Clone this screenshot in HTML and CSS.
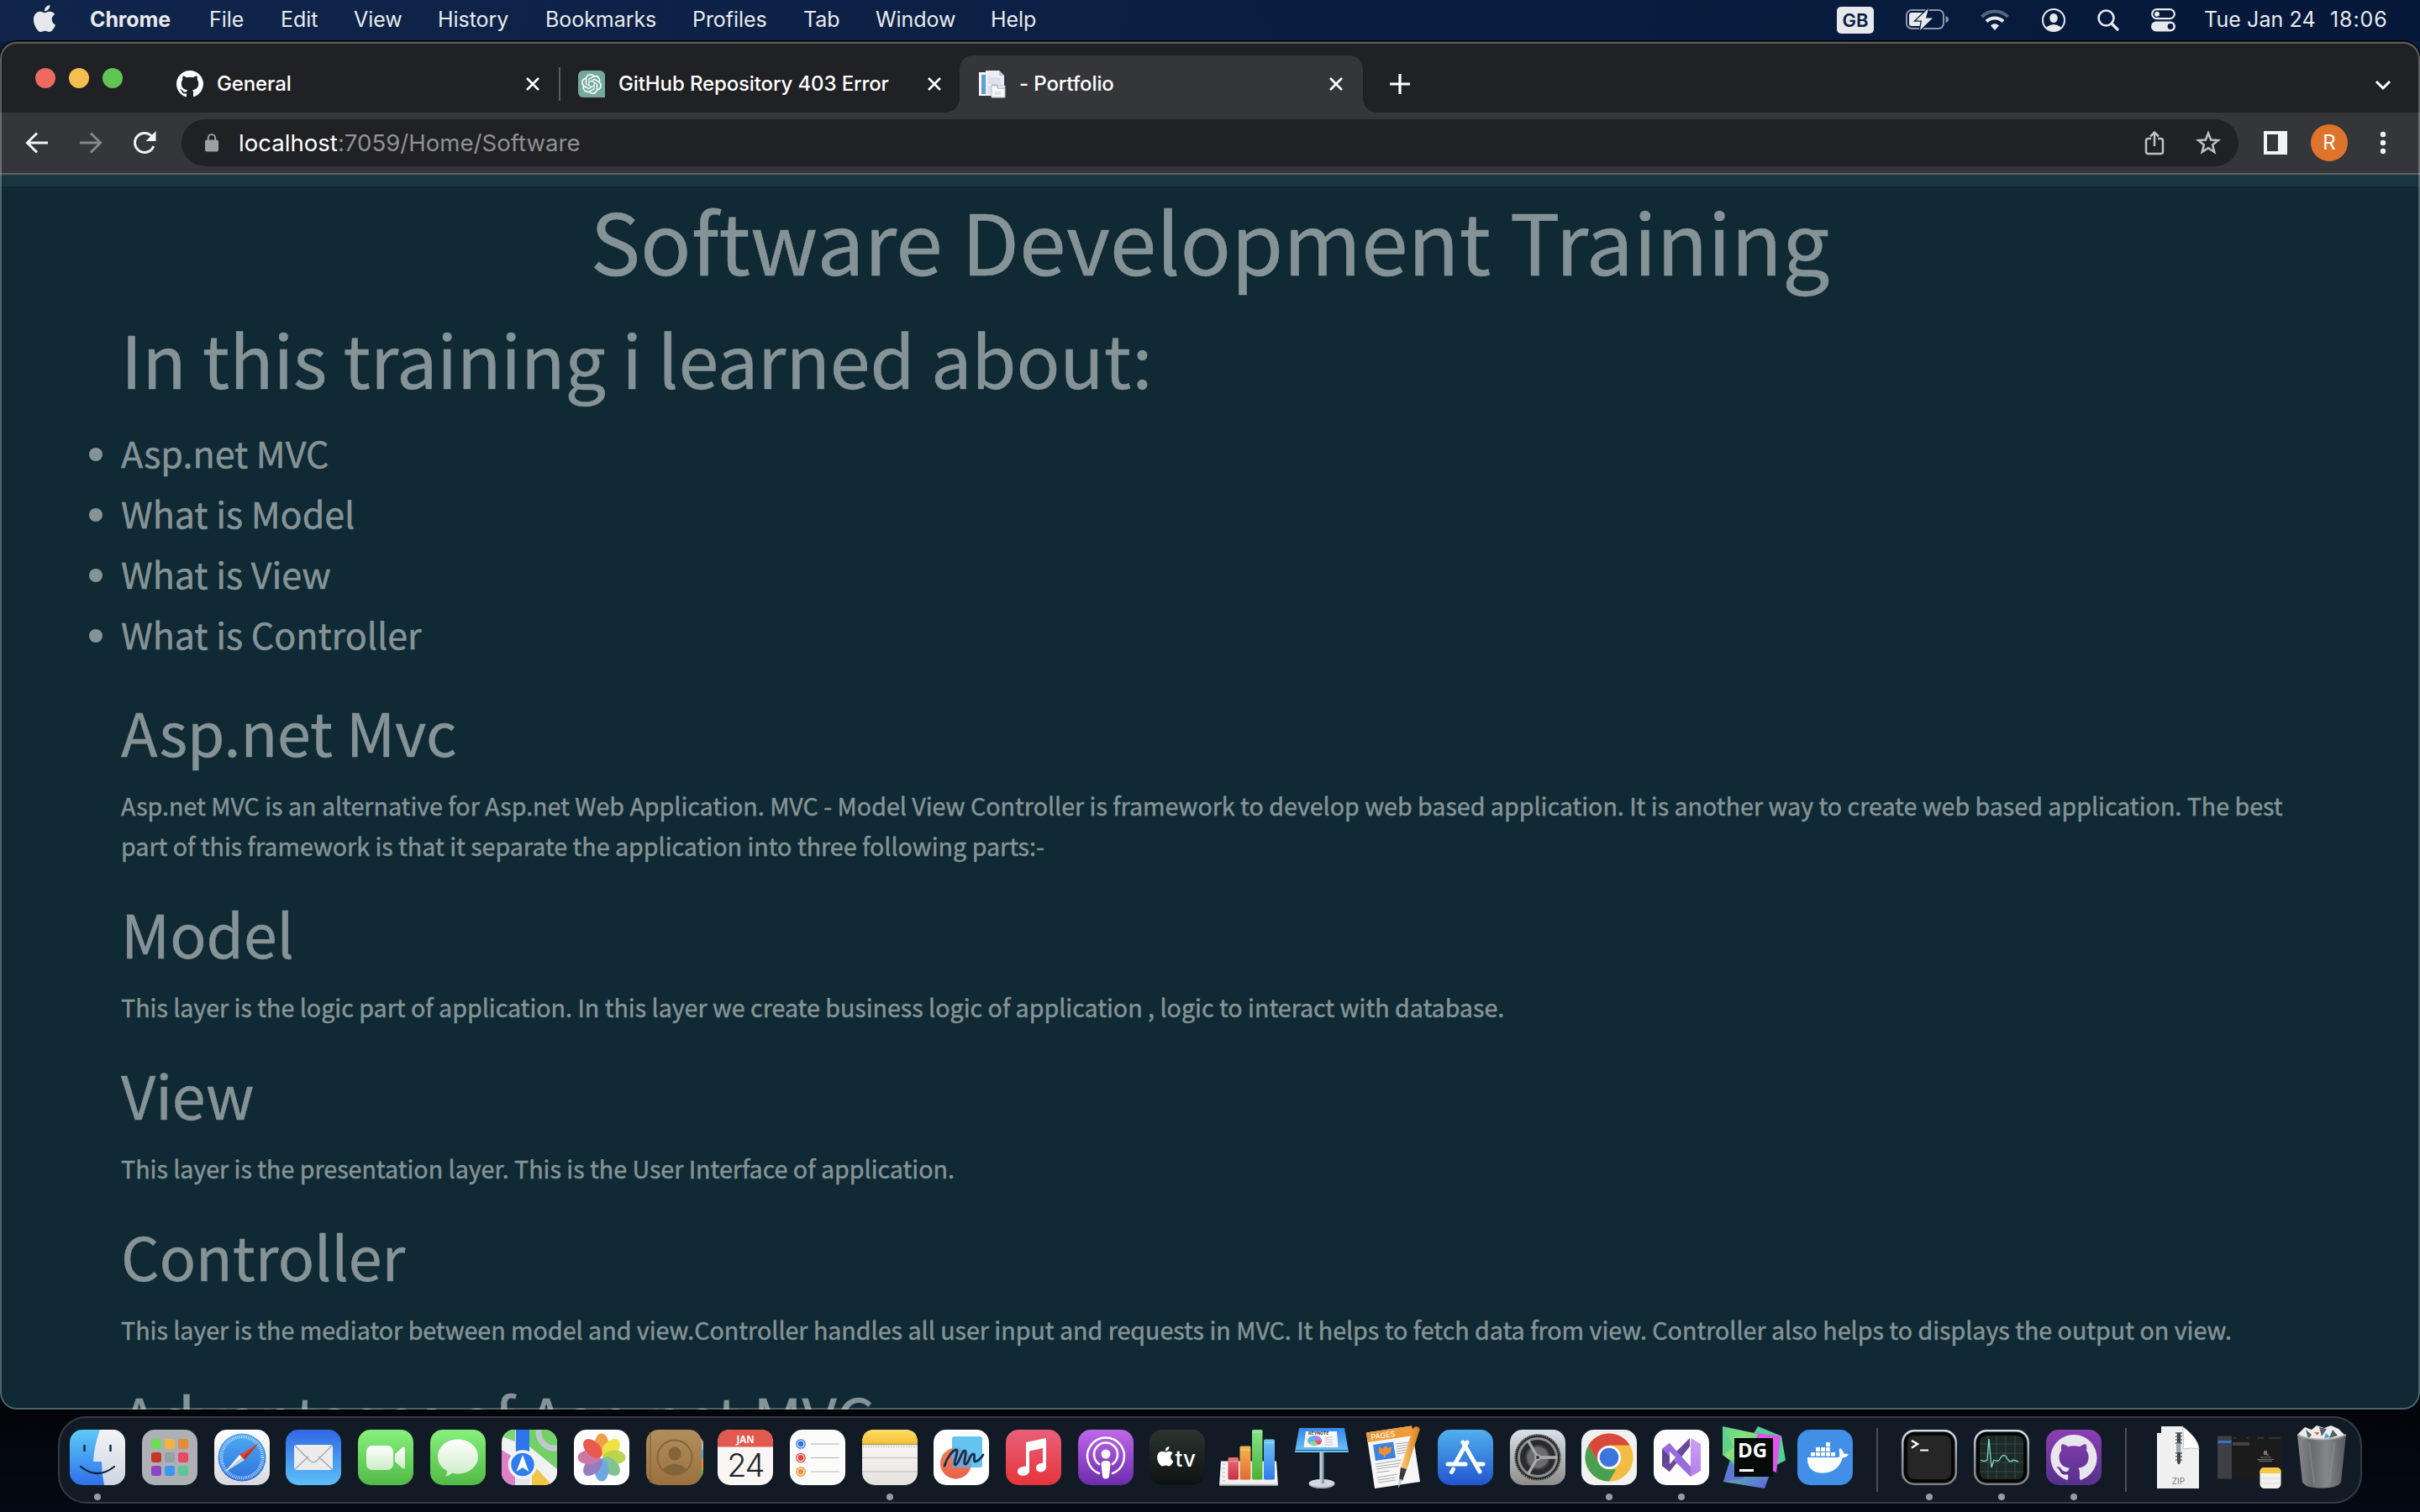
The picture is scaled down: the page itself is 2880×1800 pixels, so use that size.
FILE: index.html
```html
<!DOCTYPE html>
<html lang="en">
<head>
<meta charset="utf-8">
<title>- Portfolio</title>
<link rel="stylesheet" href="styles.css">
</head>
<body>
<svg class="defs" aria-hidden="true">
  <defs>
    <path id="apple" d="M12.152 6.896c-.948 0-2.415-1.078-3.96-1.04-2.04.027-3.91 1.183-4.961 3.014-2.117 3.675-.546 9.103 1.519 12.09 1.013 1.454 2.208 3.09 3.792 3.039 1.52-.065 2.09-.987 3.935-.987 1.831 0 2.35.987 3.96.948 1.637-.026 2.676-1.48 3.676-2.948 1.156-1.688 1.636-3.325 1.662-3.415-.039-.013-3.182-1.221-3.22-4.857-.026-3.04 2.48-4.494 2.597-4.559-1.429-2.09-3.623-2.324-4.39-2.376-2-.156-3.675 1.09-4.61 1.09zM15.53 3.83c.843-1.012 1.4-2.427 1.245-3.83-1.207.052-2.662.805-3.532 1.818-.78.896-1.454 2.338-1.273 3.714 1.338.104 2.715-.688 3.559-1.701"/>
    <path id="octocat" d="M8 0C3.58 0 0 3.58 0 8c0 3.54 2.29 6.53 5.47 7.59.4.07.55-.17.55-.38 0-.19-.01-.82-.01-1.49-2.01.37-2.53-.49-2.69-.94-.09-.23-.48-.94-.82-1.13-.28-.15-.68-.52-.01-.53.63-.01 1.08.58 1.23.82.72 1.21 1.87.87 2.33.66.07-.52.28-.87.51-1.07-1.78-.2-3.64-.89-3.64-3.95 0-.87.31-1.59.82-2.15-.08-.2-.36-1.02.08-2.12 0 0 .67-.21 2.2.82.64-.18 1.32-.27 2-.27.68 0 1.36.09 2 .27 1.53-1.04 2.2-.82 2.2-.82.44 1.1.16 1.92.08 2.12.51.56.82 1.27.82 2.15 0 3.07-1.87 3.75-3.65 3.95.29.25.54.73.54 1.48 0 1.07-.01 1.93-.01 2.2 0 .21.15.46.55.38A8.013 8.013 0 0016 8c0-4.42-3.58-8-8-8z"/>
    <clipPath id="squircle"><rect width="66" height="66" rx="15"/></clipPath>
    <linearGradient id="gFinder" x2="0" y2="1"><stop stop-color="#5ccbf9"/><stop offset="1" stop-color="#2f6fe9"/></linearGradient>
    <linearGradient id="gFace" x2="0" y2="1"><stop stop-color="#f3f3f5"/><stop offset="1" stop-color="#cdd6e2"/></linearGradient>
    <linearGradient id="gWhite" x2="0" y2="1"><stop stop-color="#ffffff"/><stop offset="1" stop-color="#d9d9db"/></linearGradient>
    <linearGradient id="gSafari" x2="0" y2="1"><stop stop-color="#4dabf0"/><stop offset="1" stop-color="#2f72de"/></linearGradient>
    <linearGradient id="gMail" x2="0" y2="1"><stop stop-color="#3068e5"/><stop offset="1" stop-color="#5cc0f8"/></linearGradient>
    <linearGradient id="gGreen" x2="0" y2="1"><stop stop-color="#86f17c"/><stop offset="1" stop-color="#52b945"/></linearGradient>
    <linearGradient id="gBubble" x2="0" y2="1"><stop stop-color="#ffffff"/><stop offset="1" stop-color="#cdebc8"/></linearGradient>
    <linearGradient id="gBrown" x2="0" y2="1"><stop stop-color="#b08f5c"/><stop offset="1" stop-color="#9b703f"/></linearGradient>
    <linearGradient id="gYellow" x2="0" y2="1"><stop stop-color="#fadf68"/><stop offset="1" stop-color="#f6c033"/></linearGradient>
    <linearGradient id="gPaper" x2="0" y2="1"><stop stop-color="#ffffff"/><stop offset="1" stop-color="#e4e1dc"/></linearGradient>
    <linearGradient id="gMusic" x2="0" y2="1"><stop stop-color="#e8607a"/><stop offset="1" stop-color="#e6343b"/></linearGradient>
    <linearGradient id="gPod" x2="0" y2="1"><stop stop-color="#bd68ea"/><stop offset="1" stop-color="#6c2cab"/></linearGradient>
    <linearGradient id="gTv" x2="0" y2="1"><stop stop-color="#2a3530"/><stop offset="1" stop-color="#0e1112"/></linearGradient>
    <linearGradient id="gStore" x2="0" y2="1"><stop stop-color="#50b0ee"/><stop offset="1" stop-color="#2354cf"/></linearGradient>
    <linearGradient id="gGear" x2="0" y2="1"><stop stop-color="#d6e2ea"/><stop offset="1" stop-color="#8f8c89"/></linearGradient>
    <linearGradient id="gMetal" x2="0" y2="1"><stop stop-color="#cfdfe9"/><stop offset=".5" stop-color="#8f9ba5"/><stop offset="1" stop-color="#827f7d"/></linearGradient>
    <linearGradient id="gHub" x2="0" y2="1"><stop stop-color="#8a3fb4"/><stop offset="1" stop-color="#56308a"/></linearGradient>
    <linearGradient id="gRed" x2="0" y2="1"><stop stop-color="#e8707a"/><stop offset="1" stop-color="#c92f3e"/></linearGradient>
    <linearGradient id="gOrange" x2="0" y2="1"><stop stop-color="#f3b74c"/><stop offset="1" stop-color="#e26a33"/></linearGradient>
    <linearGradient id="gBarGreen" x2="0" y2="1"><stop stop-color="#84e58c"/><stop offset="1" stop-color="#4bb033"/></linearGradient>
    <linearGradient id="gBarBlue" x2="0" y2="1"><stop stop-color="#6fc6f4"/><stop offset="1" stop-color="#2f79ec"/></linearGradient>
    <linearGradient id="gBoard" x2="0" y2="1"><stop stop-color="#3488ee"/><stop offset="1" stop-color="#6fc6f4"/></linearGradient>
    <linearGradient id="gPole"><stop stop-color="#dfe6ee"/><stop offset=".5" stop-color="#aab8c8"/><stop offset="1" stop-color="#6d7a88"/></linearGradient>
    <linearGradient id="gPen"><stop stop-color="#ffd27a"/><stop offset="1" stop-color="#d77a1a"/></linearGradient>
    <linearGradient id="gBin"><stop stop-color="#8d8f91"/><stop offset=".3" stop-color="#6e7072"/><stop offset=".6" stop-color="#8a8c8e"/><stop offset="1" stop-color="#5a5d60"/></linearGradient>
    <linearGradient id="gDgA" x2="1" y2="1"><stop stop-color="#55cf90"/><stop offset=".4" stop-color="#8be27a"/><stop offset="1" stop-color="#4fb5a5"/></linearGradient>
    <linearGradient id="gDgB" x2="1" y2="1"><stop stop-color="#5fdc8a"/><stop offset="1" stop-color="#5b5be8"/></linearGradient>
    <linearGradient id="gVs" x2="0" y2="1"><stop stop-color="#c9a0f5"/><stop offset="1" stop-color="#b380ec"/></linearGradient>
  </defs>
</svg>

<header class="menubar">
  <nav class="menus">
    <svg class="menu-apple" viewBox="0 0 24 24"><use href="#apple"/></svg>
    <b class="app-name">Chrome</b><span>File</span><span>Edit</span><span>View</span><span>History</span><span>Bookmarks</span><span>Profiles</span><span>Tab</span><span>Window</span><span>Help</span>
  </nav>
  <div class="status">
    <span class="lang">GB</span>
    <svg width="52" height="26" viewBox="0 0 52 26"><rect x="1" y="1" width="44" height="22" rx="6" fill="none" stroke="#8c97a9" stroke-width="2"/><path d="M47.500 8q3.500 1 3.500 4t-3.500 4z" fill="#8c97a9"/><rect x="4" y="4" width="20" height="16" rx="3"/><path d="M27-1 12 13.500h7L17 25 32 10.500h-8z" stroke="#061a3a" stroke-width="2.500" paint-order="stroke"/></svg>
    <svg width="34" height="26" viewBox="0 0 34 26"><path d="M1.500 9a22 22 0 0 1 31 0" fill="none" stroke="#57657c" stroke-width="4"/><path d="M7 14.500a14.500 14.500 0 0 1 20 0" fill="none" stroke="#e6e8ec" stroke-width="4"/><path d="M17 25l-5-5.500q5-4.500 10 0z"/></svg>
    <svg width="28" height="28" viewBox="0 0 28 28"><circle cx="14" cy="14" r="13" fill="none" stroke="#e6e8ec" stroke-width="2"/><ellipse cx="14" cy="11.500" rx="4.700" ry="5.500"/><path d="M5 22.500q9-7 18 0a12 12 0 0 1-18 0z"/></svg>
    <svg width="26" height="26" viewBox="0 0 26 26"><circle cx="10.500" cy="10.500" r="9" fill="none" stroke="#e6e8ec" stroke-width="2.600"/><path d="M17 17l7 7" stroke="#e6e8ec" stroke-width="3.400" stroke-linecap="round"/></svg>
    <svg width="29" height="28" viewBox="0 0 29 28"><rect x="1.200" y="1.200" width="26.600" height="11" rx="5.500" fill="none" stroke="#e6e8ec" stroke-width="2.200"/><circle cx="7" cy="6.700" r="3"/><rect y="15.500" width="29" height="12" rx="6"/><circle cx="23" cy="21.500" r="3.400" fill="#061a3a"/></svg>
    <span class="date">Tue Jan 24</span><span class="time">18:06</span>
  </div>
</header>

<main class="window">
  <div class="tabstrip">
    <div class="lights"><i class="red"></i><i class="amber"></i><i class="green"></i></div>
    <div class="tab first">
      <svg class="fav" viewBox="0 0 16 16" fill="#fff"><use href="#octocat"/></svg>
      <span class="tab-title">General</span>
      <svg class="close" viewBox="0 0 18 18"><path d="M2 2l14 14M16 2 2 16"/></svg>
    </div>
    <i class="tab-sep"></i>
    <div class="tab second">
      <svg class="fav" viewBox="0 0 32 32"><path d="M6 0h20a6 6 0 0 1 6 6v26H6a6 6 0 0 1-6-6V6a6 6 0 0 1 6-6z" fill="#75a99c"/><path transform="translate(4 4)" fill="#fff" d="M22.282 9.821a5.985 5.985 0 0 0-.516-4.910 6.046 6.046 0 0 0-6.510-2.900A6.065 6.065 0 0 0 4.981 4.182a5.985 5.985 0 0 0-3.998 2.900 6.046 6.046 0 0 0 .743 7.097 5.980 5.980 0 0 0 .511 4.911 6.051 6.051 0 0 0 6.515 2.900A5.985 5.985 0 0 0 13.260 24a6.056 6.056 0 0 0 5.772-4.206 5.989 5.989 0 0 0 3.998-2.900 6.056 6.056 0 0 0-.748-7.073zm-9.022 12.608a4.476 4.476 0 0 1-2.876-1.041l.142-.080 4.778-2.758a.795.795 0 0 0 .393-.681v-6.737l2.020 1.169a.071.071 0 0 1 .038.052v5.583a4.504 4.504 0 0 1-4.495 4.494zm-9.661-4.125a4.471 4.471 0 0 1-.535-3.014l.142.085 4.783 2.758a.771.771 0 0 0 .781 0l5.843-3.369v2.332a.080.080 0 0 1-.033.062L9.740 19.950a4.499 4.499 0 0 1-6.141-1.646zM2.341 7.896a4.485 4.485 0 0 1 2.366-1.973V11.600a.766.766 0 0 0 .388.677l5.814 3.354-2.020 1.169a.076.076 0 0 1-.071 0l-4.830-2.787A4.504 4.504 0 0 1 2.341 7.872zm16.596 3.856L13.104 8.364 15.119 7.200a.076.076 0 0 1 .071 0l4.830 2.791a4.494 4.494 0 0 1-.677 8.104v-5.677a.790.790 0 0 0-.407-.667zm2.011-3.023l-.142-.085-4.774-2.782a.776.776 0 0 0-.785 0L9.409 9.230V6.897a.066.066 0 0 1 .028-.062l4.830-2.787a4.499 4.499 0 0 1 6.680 4.660zM8.307 12.863l-2.020-1.164a.080.080 0 0 1-.038-.057V6.074a4.499 4.499 0 0 1 7.376-3.454l-.142.081L8.704 5.459a.795.795 0 0 0-.393.681zm1.098-2.365l2.602-1.500 2.607 1.500v2.999l-2.597 1.500-2.607-1.500z"/></svg>
      <span class="tab-title">GitHub Repository 403 Error</span>
      <svg class="close" viewBox="0 0 18 18"><path d="M2 2l14 14M16 2 2 16"/></svg>
    </div>
    <div class="tab active">
      <svg class="fav" viewBox="0 0 32 32"><path d="M0 2h8v28H0z" fill="#f4f8fb"/><path d="M3 5h6v23H3z" fill="#5d9fd0"/><path d="M8 0h16l6 6v24H8z" fill="#eceef3"/><path d="M24 0l6 6h-6z" fill="#c4c8d0"/><path d="M11 8h15v8H11zM11 18h5v9h-5z" fill="#dde0ea"/><path d="M15 18h16v14H15z" fill="#f6f7f9" stroke="#babec6"/><path d="M15 17h7v4h9" fill="none" stroke="#9ca2ab"/><path d="M19 25h7v4h-7z" fill="#dfe2e8"/></svg>
      <span class="tab-title">- Portfolio</span>
      <svg class="close" viewBox="0 0 18 18"><path d="M2 2l14 14M16 2 2 16"/></svg>
    </div>
    <svg class="plus" viewBox="0 0 24 24"><path d="M12 0v24M0 12h24"/></svg>
    <svg class="chev" viewBox="0 0 20 12"><path d="M2 2l8 8 8-8"/></svg>
  </div>

  <div class="toolbar">
    <svg class="nav" viewBox="0 0 28 28"><path d="M27 14H3M14 2.500 2.500 14 14 25.500"/></svg>
    <svg class="nav dim" viewBox="0 0 28 28"><path d="M1 14h24M14 2.500 25.500 14 14 25.500"/></svg>
    <svg class="nav" viewBox="0 0 28 28"><path d="M24.800 18A11.500 11.500 0 1 1 22.600 6.300"/><path d="M27.500 0v12h-12z" class="solid"/></svg>
    <div class="omnibox">
      <svg class="lock" viewBox="0 0 16 22"><rect y="7.500" width="16" height="14" rx="2"/><path d="M3.800 8V5.300a4.200 4.200 0 0 1 8.400 0V8" fill="none" stroke="#9aa0a6" stroke-width="2"/></svg>
      <span class="url">localhost<em>:7059/Home/Software</em></span>
      <svg class="share" viewBox="0 0 24 30"><path d="M8 10H4.500Q2 10 2 12.500v13Q2 28 4.500 28h15q2.500 0 2.500-2.500v-13Q22 10 19.500 10H16M12 19V3M7 7.500l5-5 5 5"/></svg>
      <svg class="star" viewBox="0 0 30 30"><path d="M15 3.500l3.100 8 8.700.5-6.700 5.500 2.200 8.500-7.300-4.700L7.700 26l2.200-8.500L3.200 12l8.700-.5z"/></svg>
    </div>
    <svg class="panel" viewBox="0 0 28 28"><path d="M0 0h28v28H0zM4 4v20h13V4z" fill-rule="evenodd"/></svg>
    <span class="avatar">R</span>
    <svg class="dots" viewBox="0 0 8 28"><circle cx="4" cy="4" r="3.200"/><circle cx="4" cy="14" r="3.200"/><circle cx="4" cy="24" r="3.200"/></svg>
  </div>

  <section class="page">
    <div class="navband"></div>
    <h1 class="title">Software Development Training</h1>
    <h2 class="lead">In this training i learned about:</h2>
    <ul class="topics">
      <li>Asp.net MVC</li>
      <li>What is Model</li>
      <li>What is View</li>
      <li>What is Controller</li>
    </ul>
    <h3>Asp.net Mvc</h3>
    <p>Asp.net MVC is an alternative for Asp.net Web Application. MVC - Model View Controller is framework to develop web based application. It is another way to create web based application. The best<br>part of this framework is that it separate the application into three following parts:-</p>
    <h3>Model</h3>
    <p>This layer is the logic part of application. In this layer we create business logic of application , logic to interact with database.</p>
    <h3>View</h3>
    <p>This layer is the presentation layer. This is the User Interface of application.</p>
    <h3>Controller</h3>
    <p>This layer is the mediator between model and view.Controller handles all user input and requests in MVC. It helps to fetch data from view. Controller also helps to displays the output on view.</p>
    <h3>Advantages of Asp.net MVC</h3>
  </section>
</main>

<footer class="dock">
  <div class="app running"><svg viewBox="0 0 66 66"><g clip-path="url(#squircle)"><path fill="url(#gFinder)" d="M0 0h66v66H0z"/><path fill="url(#gFace)" d="M36 0q-7 19-8 38h10q0 14 3 28h25V0z"/></g><path d="M17.500 19v6M48.500 19v6" stroke="#1b2f45" stroke-width="2.600" stroke-linecap="round"/><path d="M13 44q20 16 40 0" fill="none" stroke="#15202c" stroke-width="2.200" stroke-linecap="round"/></svg></div>
  <div class="app"><svg viewBox="0 0 66 66"><rect width="66" height="66" rx="15" fill="#adb0b4"/><rect x="11" y="11" width="12" height="12" rx="3" fill="#6fdc55"/><rect x="27" y="11" width="12" height="12" rx="3" fill="#f2b53c"/><rect x="43" y="11" width="12" height="12" rx="3" fill="#e58a36"/><rect x="11" y="27" width="12" height="12" rx="3" fill="#c8352b"/><rect x="27" y="27" width="12" height="12" rx="3" fill="#96a0a5"/><rect x="43" y="27" width="12" height="12" rx="3" fill="#e84a5f"/><rect x="11" y="43" width="12" height="12" rx="3" fill="#8e45c4"/><rect x="27" y="43" width="12" height="12" rx="3" fill="#3a97f2"/><rect x="43" y="43" width="12" height="12" rx="3" fill="#60c596"/></svg></div>
  <div class="app"><svg viewBox="0 0 66 66"><rect width="66" height="66" rx="15" fill="url(#gWhite)"/><circle cx="33" cy="33" r="28.500" fill="url(#gSafari)"/><circle cx="33" cy="33" r="24.500" fill="none" stroke="#d4e7fa" stroke-width="4" stroke-dasharray=".8 1.340"/><path d="M53 16 30 30l6 6z" fill="#e0453a"/><path d="M53 16 36 36l-3-3z" fill="#b93329"/><path d="M13 50l17-20 6 6z" fill="#f2f4f6"/><path d="M13 50l20-17 3 3z" fill="#c4ccd4"/></svg></div>
  <div class="app"><svg viewBox="0 0 66 66"><rect width="66" height="66" rx="15" fill="url(#gMail)"/><rect x="10" y="18" width="46" height="30" rx="3" fill="#ececed"/><path d="M11 47l16-15M55 47 39 32M11 19l18 18q4 3.500 8 0l18-18" fill="none" stroke="#a7abb0" stroke-width="1.500"/></svg></div>
  <div class="app"><svg viewBox="0 0 66 66"><rect width="66" height="66" rx="15" fill="url(#gGreen)"/><rect x="10" y="19" width="32" height="29" rx="7" fill="url(#gBubble)"/><path d="M44 29l9-8q3-1.500 3 1v23q0 2.500-3 1l-9-8z" fill="url(#gBubble)"/></svg></div>
  <div class="app"><svg viewBox="0 0 66 66"><rect width="66" height="66" rx="15" fill="url(#gGreen)"/><path d="M33 11.500c13.500 0 24 9 24 20.500s-10.500 20.500-24 20.500q-4 0-7-1-3 3.500-8.500 4 3-3 2.500-6.500C13.500 45.500 9 39.500 9 32c0-11.500 10.500-20.500 24-20.500z" fill="url(#gBubble)"/></svg></div>
  <div class="app"><svg viewBox="0 0 66 66"><g clip-path="url(#squircle)"><path fill="#f0f1f3" d="M0 0h66v66H0z"/><path d="M0 0h16v14L0 8z" fill="#7cd673"/><path d="M33 0h33v47L33 20z" fill="#73cf68"/><path d="M0 24l16 10v32H0z" fill="#dd80c8"/><path d="M36 66V40l24 26z" fill="#f3c544"/><path d="M16 0h17v66H16z" fill="#e4e6ec"/><path d="M17 0h16v26H17z" fill="#2e74ea"/><circle cx="63" cy="3" r="19" fill="none" stroke="#c2c6ce" stroke-width="7"/></g><circle cx="25" cy="41.500" r="15.500" fill="#2f7df0" stroke="#f1f3f6" stroke-width="3.500"/><path d="M25 30l7.500 20-7.500-5-7.500 5z" fill="#fff"/></svg></div>
  <div class="app"><svg viewBox="0 0 66 66"><rect width="66" height="66" rx="15" fill="#fdfdfd"/><g opacity=".9"><ellipse cx="33" cy="18" rx="8.500" ry="13.500" fill="#f09436"/><ellipse cx="33" cy="18" rx="8.500" ry="13.500" fill="#f0e02f" transform="rotate(45 33 33)"/><ellipse cx="33" cy="18" rx="8.500" ry="13.500" fill="#b6d03c" transform="rotate(90 33 33)"/><ellipse cx="33" cy="18" rx="8.500" ry="13.500" fill="#73bd83" transform="rotate(135 33 33)"/><ellipse cx="33" cy="18" rx="8.500" ry="13.500" fill="#5e9fdb" transform="rotate(180 33 33)"/><ellipse cx="33" cy="18" rx="8.500" ry="13.500" fill="#8b6dbb" transform="rotate(225 33 33)"/><ellipse cx="33" cy="18" rx="8.500" ry="13.500" fill="#c9699e" transform="rotate(270 33 33)"/><ellipse cx="33" cy="18" rx="8.500" ry="13.500" fill="#e8483c" transform="rotate(315 33 33)"/></g></svg></div>
  <div class="app"><svg viewBox="0 0 66 66"><path d="M60 9q8 0 8 8v8h-8z" fill="#b9b9b5"/><path d="M60 24h8v11h-8z" fill="#53a7e4"/><path d="M60 35h8v12h-8z" fill="#ee8c34"/><path d="M60 47h8q0 11-8 12z" fill="#6cc85d"/><rect width="66" height="66" rx="15" fill="url(#gBrown)"/><path d="M5 3v60" stroke="#8b673b" stroke-width="1.500"/><circle cx="34" cy="33" r="20.500" fill="none" stroke="#84633a" stroke-width="1.800"/><ellipse cx="34" cy="28.500" rx="7.500" ry="8" fill="#84633a"/><path d="M20 47q14-13 28 0-14 14-28 0z" fill="#84633a"/></svg></div>
  <div class="app"><svg viewBox="0 0 66 66"><rect width="66" height="66" rx="15" fill="#f8f7f6"/><path d="M0 20.500V15Q0 0 15 0h36q15 0 15 15v5.500z" fill="#e2594f"/><text x="33" y="16" class="cal-month">JAN</text><text x="33" y="56" class="cal-day">24</text></svg></div>
  <div class="app"><svg viewBox="0 0 66 66"><rect width="66" height="66" rx="15" fill="#fbfbfa"/><g stroke-width="1.300"><circle cx="13" cy="17" r="5.200" fill="none" stroke="#3478e5"/><circle cx="13" cy="17" r="3.400" fill="#2e76ea"/><circle cx="13" cy="33.500" r="5.200" fill="none" stroke="#e2483e"/><circle cx="13" cy="33.500" r="3.400" fill="#e2483e"/><circle cx="13" cy="50" r="5.200" fill="none" stroke="#e69235"/><circle cx="13" cy="50" r="3.400" fill="#e69235"/></g><path d="M25 17h34M25 33.500h34M25 50h34" stroke="#b4b6ba" stroke-width="1.200"/></svg></div>
  <div class="app running"><svg viewBox="0 0 66 66"><rect width="66" height="66" rx="15" fill="url(#gPaper)"/><path d="M0 17v-2Q0 0 15 0h36q15 0 15 15v2z" fill="url(#gYellow)"/><path d="M0 17.500h66" stroke="#a8997a" stroke-width="1.500"/><path d="M1 20.500h64" stroke="#c2c0ba" stroke-width="1.500" stroke-dasharray="1.500 1.500"/><path d="M0 33.500h66M0 50h66" stroke="#cfccc8" stroke-width="1.300"/></svg></div>
  <div class="app"><svg viewBox="0 0 66 66"><rect width="66" height="66" rx="15" fill="#fff"/><circle cx="26.500" cy="40" r="18.500" fill="url(#gOrange)"/><circle cx="26.500" cy="40" r="18.500" fill="#ed5b64" opacity=".55"/><rect x="22" y="8" width="36" height="37" rx="3" fill="#53bdee" opacity=".9"/><path d="M22 45V22q10-1 19 7 5 8 4 16z" fill="#7d9fd0" opacity=".8"/><path d="M13 43c3-10 10-19 14-19s-5 18-1 18 7-17 11-17-3 16 1 16 5-12 9-12-1 10 3 9 7-5 9-8" fill="none" stroke="#11304c" stroke-width="2.800" stroke-linecap="round"/></svg></div>
  <div class="app"><svg viewBox="0 0 66 66"><rect width="66" height="66" rx="15" fill="url(#gMusic)"/><path d="M24 15l24-5v34.500c0 7-12 8-12 1 0-4 4-5.500 8-6V22l-16 3.500V49c0 7.500-15 8-14 0 .5-4 5-5 10-5.500z" fill="#fff"/></svg></div>
  <div class="app"><svg viewBox="0 0 66 66"><rect width="66" height="66" rx="15" fill="url(#gPod)"/><g fill="none" stroke="#fff" stroke-width="2.600" stroke-linecap="round"><path d="M25 52a22 22 0 1 1 16 0"/><path d="M25 41a14 14 0 1 1 16 0"/></g><circle cx="33" cy="29" r="5.500" fill="#fff"/><path d="M27.500 41q0-4 5.500-4t5.500 4l-1.500 14q-.5 3.500-4 3.500T29 55z" fill="#fff"/></svg></div>
  <div class="app"><svg viewBox="0 0 66 66"><rect width="66" height="66" rx="15" fill="url(#gTv)"/><use href="#apple" transform="translate(7 20) scale(.98)" fill="#fff"/><text x="30.500" y="44" class="tv">tv</text></svg></div>
  <div class="app"><svg viewBox="0 0 66 66"><path d="M-1 37.500h66l2 29H-3z" fill="#f2f2f3"/><path d="M-3 65.500h70" stroke="#bfc0c2" stroke-width="1.500"/><path d="M1 41h3M1 46h3M1 51h3M1 56h3M1 61h3" stroke="#b9babd"/><rect x="7.500" y="33" width="12.500" height="26.500" rx="1.500" fill="url(#gRed)"/><rect x="21.500" y="19.500" width="13" height="40" rx="1.500" fill="url(#gOrange)"/><rect x="36" width="12.500" height="59.500" rx="1.500" fill="url(#gBarGreen)"/><rect x="50" y="11.500" width="13" height="48" rx="1.500" fill="url(#gBarBlue)"/><path d="M8 37.500h12M22 24h12M36.500 3h12M50.500 15.500h12" stroke="#fff" stroke-opacity=".4"/></svg></div>
  <div class="app"><svg viewBox="0 0 66 66"><ellipse cx="33" cy="64.500" rx="15.500" ry="5.500" fill="#a9b3bf"/><ellipse cx="33" cy="63.500" rx="15" ry="4.500" fill="#d0d8e1"/><path d="M30.500 27h5.200v37q-2.600 1.500-5.200 0z" fill="url(#gPole)"/><path d="M6-2h54l5 29H1z" fill="url(#gBoard)"/><path d="M1.500 24.500h63" stroke="#23588c" stroke-width="1"/><path d="M14 2h37l1.500 19h-41z" fill="#f7f8fa"/><text x="17" y="6.300" class="key">KEYNOTE</text><ellipse cx="24.500" cy="13" rx="8.500" ry="6" fill="#58b3f0"/><path d="M24.500 13l-7.500 3q4 4 12 2z" fill="#8ddf73"/><path d="M24.500 13V7q7 0 8.500 6z" fill="#ba79e8"/><path d="M24.500 13H33q0 4-4 5z" fill="#e5506c"/><path d="M36 9h10M36 12h10M36 15h10M36 18h10" stroke="#c9b7cf" stroke-width="1.200"/></svg></div>
  <div class="app"><svg viewBox="0 0 66 66"><path d="M1 3.500 55-4.500 65 62l-54 8z" fill="#f6f6f6"/><path d="M1 3.500 55-4.500 57 7 2.500 15z" fill="#f09b38"/><text x="7" y="12" class="pages" transform="rotate(-8 7 12)">PAGES</text><path d="M9 18l24-3.500 3 19-24 3.500z" fill="#3d82e2"/><path d="M16 20l4 3 4-4 3 3 4-2-1 7-6 3-1 4-2-4-5-2z" fill="#ee8f2e"/><path d="M36 17l16-2M36.500 20l14-2M37 23l12-2M37 26l11-2M37.500 29l10-2M12 41l31-5M12.500 44l29-4M13 47l27-4M13.500 51l15-2M14 57l24-4M14.500 60l21-3M15 63l21-3" stroke="#aaa" stroke-width="1"/><path d="M56 0q2-5 6-3.500T64 2L49 48h-8z" fill="url(#gPen)"/><path d="M42 45l7 2-5 14-4-2z" fill="#3a3a3c"/><path d="M40 58l4 2-5 9.500z" fill="#c5c8cc"/></svg></div>
  <div class="app"><svg viewBox="0 0 66 66"><rect width="66" height="66" rx="15" fill="url(#gStore)"/><g stroke="#fff" stroke-width="5" stroke-linecap="round"><path d="M35 15 22 38M30 15l20 35M18.500 47l-2 3.500M12 41h21M45 41h9"/></g></svg></div>
  <div class="app"><svg viewBox="0 0 66 66"><rect width="66" height="66" rx="15" fill="url(#gGear)"/><circle cx="33" cy="33" r="27.500" fill="#2b2b2c"/><circle cx="33" cy="33" r="27" fill="none" stroke="#8e9092" stroke-width="2" stroke-dasharray="1.200 1.600"/><circle cx="33" cy="33" r="22.500" fill="none" stroke="#8b8d8f" stroke-width="3"/><circle cx="33" cy="33" r="15.500" fill="#4b4b4d" stroke="#27282a" stroke-width="3" stroke-dasharray="1.300 1"/><circle cx="33" cy="33" r="12.500" fill="#6c6c6e"/><path d="M33 33h23M33 33 21.500 13M33 33 21.500 53" stroke="#a9abad" stroke-width="3.500"/><circle cx="33" cy="33" r="3.800" fill="#a9abad"/><circle cx="33" cy="33" r="2" fill="#333"/></svg></div>
  <div class="app running"><svg viewBox="0 0 66 66"><rect width="66" height="66" rx="15" fill="#f1f1f1"/><circle cx="33" cy="33" r="28.500" fill="#f2bd42"/><path d="M33 18.750H57.700A28.500 28.500 0 0 0 8.300 18.750L20.700 40z" fill="#d9493b"/><path d="M8.300 18.750 20.700 40.100Q25 47.300 33 47.250h12.300L33 61.500A28.500 28.500 0 0 1 8.300 18.750z" fill="#4c9f50"/><path d="M45.300 40.100 33 61.500A28.500 28.500 0 0 0 57.700 18.750H33z" fill="#f2bd42"/><circle cx="33" cy="33" r="14" fill="#fff"/><circle cx="33" cy="33" r="11.300" fill="#3c76dd"/></svg></div>
  <div class="app running"><svg viewBox="0 0 66 66"><rect width="66" height="66" rx="15" fill="#fdfdfd"/><path d="M10 23l9-7v34l-9-7z" fill="#5d4391"/><path d="M19 50 43 20V10L10 43z" fill="#68499c"/><path d="M44 10l12 7v32l-12 7z" fill="url(#gVs)"/><path d="M10 23l9-7 25 28v12z" fill="#9a6bdd"/><path d="M19 26v15l7-8z" fill="#fff"/></svg></div>
  <div class="app datagrip"><svg viewBox="0 0 66 66"><path d="M42-4 70 7.500l5 29-10 5-35-25z" fill="#55cf95"/><path d="M30 3l39 4.500-5 43.500L40 40z" fill="#e052ea"/><path d="M0-4l42 9-15 45L0 30z" fill="url(#gDgA)"/><path d="M9 36 1 62l49 8 11-30z" fill="url(#gDgB)"/><path d="M9 36l17 22-25 4z" fill="#5f63e2" opacity=".75"/><path d="M0-4l14 25L0 30z" fill="#62d188"/><path d="M14 10h46v46H14z" fill="#060b09"/><path d="M20 47h17v3H20z" fill="#fff"/><text x="18" y="33" class="dg">DG</text></svg></div>
  <div class="app"><svg viewBox="0 0 66 66"><rect width="66" height="66" rx="15" fill="#418fe6"/><path d="M12 33h37q2-2 1-6-1-4 1-5 4 3 4 6.500 4-.5 6 1-2 3.500-7 4C50 45 43 51.500 30 51.500 16 51.500 11.500 43 12 33z" fill="#fff"/><path d="M16 27h5v4.500h-5zM22 27h5v4.500h-5zM28 27h5v4.500h-5zM34 27h5v4.500h-5zM40 27h5v4.500h-5zM22 21h5v5h-5zM28 21h5v5h-5zM34 21h5v5h-5zM34 15h5v5h-5z" fill="#fff"/></svg></div>
  <i class="rule"></i>
  <div class="app running"><svg viewBox="0 0 66 66"><rect width="66" height="66" rx="15" fill="url(#gMetal)"/><rect x="2.500" y="2.500" width="61" height="61" rx="13" fill="#050505"/><rect x="7" y="7" width="52" height="52" rx="8" fill="#262626"/><path d="M12 13l7 4-7 4.500" fill="none" stroke="#fff" stroke-width="2.400"/><path d="M22 24.500h10" stroke="#fff" stroke-width="2"/></svg></div>
  <div class="app running"><svg viewBox="0 0 66 66"><rect width="66" height="66" rx="15" fill="url(#gMetal)"/><rect x="2.500" y="2.500" width="61" height="61" rx="13" fill="#050505"/><rect x="7" y="7" width="52" height="52" rx="8" fill="#1d2b28"/><path d="M7 17h52M7 28h52M7 39h52M7 50h52M17 7v52M27 7v52M38 7v52M49 7v52" stroke="#3c504b" stroke-width=".8"/><path d="M8 36q4 3 8 0l2-25 3 34 3-9q5 3 7-1 5-9 9 0 4 5 7 1l6 2" fill="none" stroke="#7fd0bd" stroke-width="1.400"/></svg></div>
  <div class="app running"><svg viewBox="0 0 66 66"><rect width="66" height="66" rx="15" fill="url(#gHub)"/><use href="#octocat" transform="translate(5.500 6) scale(3.440)" fill="#e9e7ee"/></svg></div>
  <i class="rule"></i>
  <div class="app"><svg viewBox="0 0 66 66"><path d="M13-4h25L58 22v48H8V4h5z" fill="#f0f0f0"/><path d="M38-4q3 12 1 27 10-2 19 0Q57 10 38-4z" fill="#fff" stroke="#c6c6c6"/><path d="M32 4h4v34q0 3-2 3t-2-3z" fill="#3a4046"/><path d="M30 4h8M30 8h8M30 12h8M30 16h8M30 28h8M30 32h8M30 36h8" stroke="#4e5358" stroke-width="1.500"/><rect x="31" y="16" width="5.500" height="11" rx="2" fill="#9aa4ac"/><text x="33.500" y="65" class="zip">ZIP</text></svg></div>
  <div class="app"><svg viewBox="0 0 66 66"><rect x="-5" y="7.500" width="77" height="51" fill="#1b1b1c"/><rect x="-5" y="7.500" width="17" height="51" fill="#3c3f43"/><rect x="-4.500" y="13" width="16" height="3" fill="#3a72c4"/><rect x="13" y="15" width="20" height="4" fill="#434446"/><path d="M14 10h4M30 10h2M42 10h8M56 10h14" stroke="#4b4c4e"/><rect x="50" y="25" width="4" height="5" rx="1" fill="#77797b"/><circle cx="54.500" cy="30" r="1.500" fill="#b13a3e"/><path d="M46 33h13M42 35.500h20M44 37.500h16" stroke="#8c8c8e" stroke-width=".8"/><rect x="45.500" y="45" width="25" height="25" rx="5.500" fill="#f3f2f0"/><path d="M45.500 52v-2q0-5 5.500-5h14q5.500 0 5.500 5v2z" fill="#f6c944"/><path d="M45.500 58h25M45.500 64h25" stroke="#d8d5d0"/></svg></div>
  <div class="app"><svg viewBox="0 0 66 66"><path d="M5 5 13-3l8 3 6-5 9 3 8-3 9 4 8 8-6 5H10z" fill="#ececec"/><path d="M14 0l7 6-4 5zM30-3l3 11 6-9zM46 0l-4 10 10-3z" fill="#55606b"/><path d="M24 3l6 0-2 4z" fill="#e86a3a"/><path d="M38 4l5 5-7 1z" fill="#4aa0c8"/><path d="M4 6q29 11 58 0l-6 56q-3 7.500-23 7.500T10 62z" fill="url(#gBin)" opacity=".95"/><path d="M4 6q29 11 58 0" fill="none" stroke="#b4b7ba" stroke-width="1.500"/><path d="M18 16l6 48M48 16l-6 48" stroke="#a7aaad" stroke-width="2" opacity=".3"/></svg></div>
</footer>
</body>
</html>
```
FILE: styles.css
```css
* { box-sizing: border-box; }
html, body { height: 100%; margin: 0; }
body {
  display: flex;
  flex-direction: column;
  width: 2880px;
  height: 1800px;
  overflow: hidden;
  background: linear-gradient(#10254a 0, #0a1c3c 60px, #03060b 1670px, #030509 1690px, #030a15 1800px);
  font-family: Inter, "Liberation Sans", sans-serif;
  color: #fff;
}
.defs { position: absolute; width: 0; height: 0; }
svg { display: block; overflow: visible; }

/* menu bar */
.menubar {
  flex: none;
  display: flex;
  justify-content: space-between;
  height: 49px;
  padding: 0 38px 3px 38px;
  background: linear-gradient(90deg, #10254a, #0a1f42 50%, #05183a);
  font-size: 25px;
  color: #e8eaee;
}
.menubar svg { fill: #e6e8ec; }
.menus {
  display: grid;
  grid-template-columns: 69px 142px 85px 87px 100px 128px 175px 132px 86px 137px 80px;
  align-items: center;
  white-space: nowrap;
  letter-spacing: -.05px;
}
.menu-apple { width: 32px; height: 32px; margin-left: -1px; margin-top: -2px; }
.app-name { letter-spacing: -.1px; }
.status {
  display: grid;
  grid-template-columns: 82px 89px 73px 66px 64px 63px 151px 68px;
  align-items: center;
  white-space: nowrap;
}
.status svg { margin-top: 2px; }
.date { letter-spacing: .1px; }
.time { margin-left: -1px; letter-spacing: .9px; }
.lang {
  width: 44px;
  height: 32px;
  margin-top: 2px;
  border-radius: 5px;
  background: #e6e8ec;
  color: #0a1f42;
  font-size: 22px;
  font-weight: 600;
  line-height: 32px;
  text-align: center;
}

/* browser window */
.window {
  flex: none;
  display: flex;
  flex-direction: column;
  height: 1629px;
  overflow: hidden;
  position: relative;
  border-radius: 20px;
  background: #202124;
  box-shadow: 0 0 0 1px #000;
}
.window::after {
  content: "";
  position: absolute;
  inset: 1px 0 0 0;
  border: 2px solid rgba(255, 255, 255, .27);
  border-radius: 20px;
}
.tabstrip { flex: none; display: flex; height: 85px; padding-top: 17px; }
.lights { display: flex; gap: 16px; padding: 15px 0 0 42px; width: 210px; }
.lights i { width: 24px; height: 24px; border-radius: 50%; }
.red { background: #ed6a5e; }
.amber { background: #f5bf4f; }
.green { background: #61c554; }
.tab { display: flex; align-items: center; height: 68px; font-size: 24px; font-weight: 500; letter-spacing: -.12px; white-space: nowrap; }
.tab-title { flex: 1; margin: 0 0 2px 16px; }
.fav { width: 32px; height: 32px; }
.close { width: 18px; height: 18px; fill: none; stroke: #fff; stroke-width: 2.6; }
.first { width: 455px; padding-right: 22px; }
.tab-sep { width: 2px; height: 40px; margin-top: 14px; background: #5a5c60; }
.second { width: 475px; padding: 0 21px; }
.active {
  position: relative;
  width: 480px;
  padding: 0 23px;
  border-radius: 16px 16px 0 0;
  background: #35363a;
}
.active::before, .active::after {
  content: "";
  position: absolute;
  bottom: 0;
  width: 16px;
  height: 16px;
}
.active::before { left: -16px; background: radial-gradient(circle at 0 0, transparent 15.5px, #35363a 16px); }
.active::after { right: -16px; background: radial-gradient(circle at 100% 0, transparent 15.5px, #35363a 16px); }
.plus { width: 24px; height: 24px; margin: 22px 0 0 32px; stroke: #fff; stroke-width: 3.2; }
.chev { width: 20px; height: 12px; margin: 29px 34px 0 auto; fill: none; stroke: #fff; stroke-width: 3; }

.toolbar {
  flex: none;
  display: flex;
  align-items: center;
  height: 74px;
  padding: 0 40px 0 30px;
  background: #35363a;
  border-bottom: 2px solid #5f6064;
}
.nav { width: 28px; height: 28px; margin-right: 36px; fill: none; stroke: #f1f3f4; stroke-width: 3; }
.nav .solid { fill: #f1f3f4; stroke: none; }
.nav.dim { stroke: #84868a; }
.omnibox {
  display: flex;
  align-items: center;
  width: 2448px;
  height: 56px;
  margin-left: -6px;
  padding: 0 21px 0 28px;
  border-radius: 28px;
  background: #202124;
}
.lock { width: 16px; height: 22px; fill: #9aa0a6; }
.url { flex: 1; margin-left: 24px; font-size: 27.6px; }
.url em { font-style: normal; color: #909296; }
.share { width: 24px; height: 30px; margin-right: 37px; }
.star { width: 30px; height: 30px; }
.share, .star { fill: none; stroke: #bdc1c6; stroke-width: 2.5; }
.panel { width: 28px; height: 28px; margin-left: 30px; fill: #f1f3f4; }
.avatar {
  width: 44px;
  height: 44px;
  margin-left: 28px;
  border-radius: 50%;
  background: #e0732c;
  font-size: 24px;
  line-height: 44px;
  text-align: center;
}
.dots { width: 8px; height: 28px; margin-left: auto; fill: #f1f3f4; }

/* page content */
.page {
  flex: 1;
  position: relative;
  overflow: hidden;
  padding: 10px 144px 0;
  background: #0f2a34;
  color: #869396;
  font-family: "Noto Sans CJK JP", "Noto Sans", sans-serif;
  -webkit-text-stroke: .5px #869396;
}
.navband { position: absolute; top: 0; left: 0; right: 0; height: 14px; background: #19353f; }
.page h1, .page h2, .page h3 { font-weight: 400; white-space: nowrap; }
.page .title { margin: 0 0 16px; font-size: 100.1px; line-height: 134px; text-align: center; }
.page .lead { margin: 0 0 18px; font-size: 85.95px; line-height: 116px; }
.page ul { margin: 0 0 32px; padding: 0; list-style: none; }
.topics li { position: relative; font-size: 42.97px; line-height: 72px; }
.topics li::before {
  content: "";
  position: absolute;
  left: -38px;
  top: 31px;
  width: 16px;
  height: 16px;
  border-radius: 50%;
  background: #869396;
}
.page h3 { margin: 0 0 17px; font-size: 71.6px; line-height: 96px; }
.page p { margin: 0 0 31px; font-size: 28.64px; line-height: 48px; white-space: nowrap; }

/* dock */
.dock {
  flex: none;
  display: flex;
  width: 2742px;
  height: 104px;
  margin: 8px 0 0 69px;
  padding: 14px 0 0 2.6px;
  border: 2px solid #343c42;
  border-radius: 34px;
  background: #121b25;
}
.app { position: relative; width: 85.67px; height: 84px; display: flex; justify-content: center; }
.app svg { width: 66px; height: 66px; }
.datagrip { padding-right: 8px; }
.running::after {
  content: "";
  position: absolute;
  bottom: 0;
  width: 8px;
  height: 8px;
  border-radius: 50%;
  background: #959ba3;
}
.rule { width: 2px; height: 76px; margin: -2px 18.2px 0; background: #464e56; }
.cal-month { font: 700 11.5px "Open Sans", sans-serif; fill: #fff; text-anchor: middle; }
.cal-day { font: 300 38px Inter, sans-serif; fill: #262626; text-anchor: middle; letter-spacing: -1.5px; }
.tv { font: 500 26px Inter, sans-serif; fill: #fff; }
.key { font: 700 5px Inter, sans-serif; fill: #333; }
.pages { font: 400 9px Inter, sans-serif; fill: #fff; }
.dg { font: 700 24px "Open Sans", sans-serif; fill: #fff; }
.zip { font: 400 10px Inter, sans-serif; fill: #77797c; text-anchor: middle; }
```
